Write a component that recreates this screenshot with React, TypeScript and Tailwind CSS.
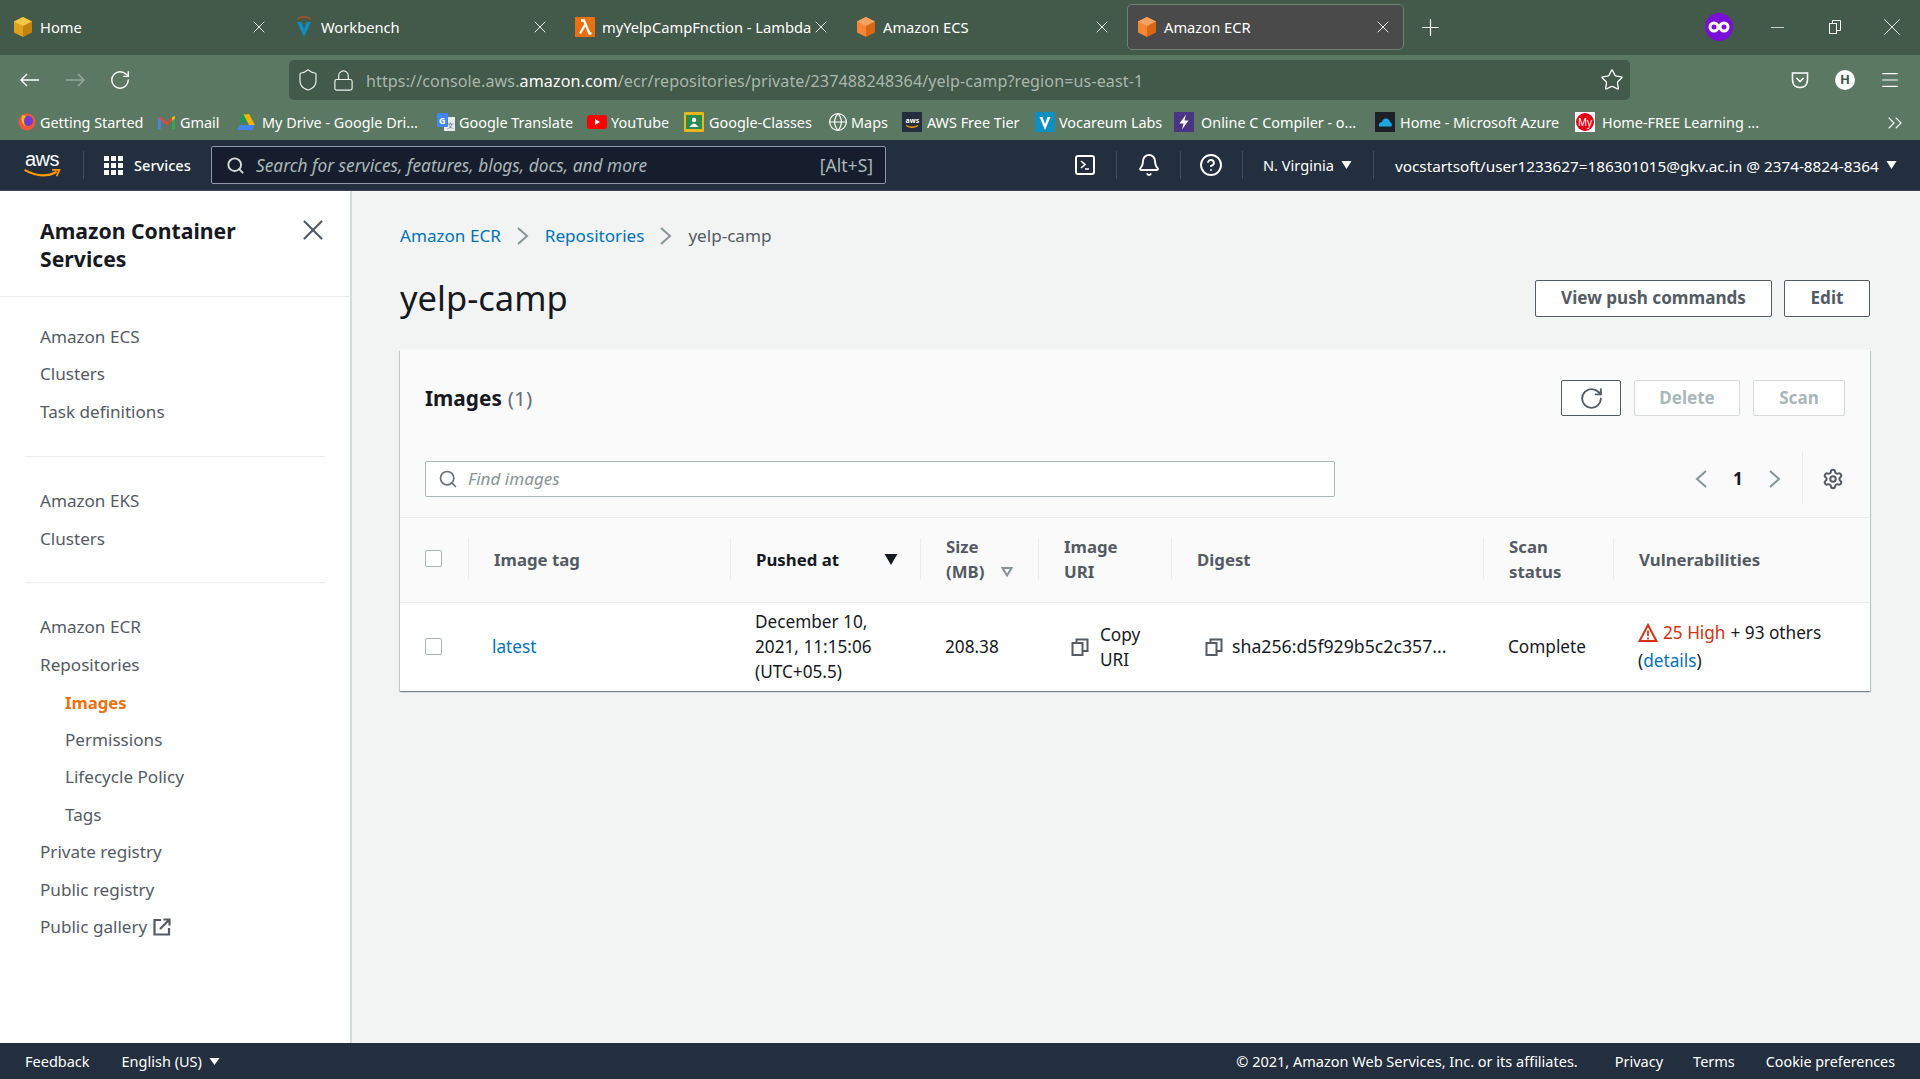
import * as React from "react";
import {
  Bell,
  ChevronsRight,
  CircleHelp,
  Globe,
  Lock,
  Menu,
  Minus,
  Plus,
  RotateCw,
  Search,
  Settings,
  Shield,
  Star,
  X,
} from "lucide-react";

function BoxIcon({ light, dark, top }: { light: string; dark: string; top: string }): React.JSX.Element {
  return (
    <svg viewBox="0 0 20 22" className="w-[20px] h-[22px] shrink-0">
      <path d="M10 1 L19 5.5 V16.5 L10 21 Z" fill={dark} />
      <path d="M10 1 L1 5.5 V16.5 L10 21 Z" fill={light} />
      <path d="M10 1 L19 5.5 L10 10 L1 5.5 Z" fill={top} />
    </svg>
  );
}

function VocareumIcon(): React.JSX.Element {
  return (
    <svg viewBox="0 0 20 22" className="w-[20px] h-[22px] shrink-0">
      <path d="M3 6 L10 21 L17 6 L12.5 6 L10 13 L7.5 6 Z" fill="#0f8fc0" />
      <path d="M3 3 Q10 -1 17 3" fill="none" stroke="#b5532b" strokeWidth="1.3" />
    </svg>
  );
}

function LambdaIcon(): React.JSX.Element {
  return (
    <svg viewBox="0 0 20 20" className="w-[20px] h-[20px] shrink-0">
      <rect width="20" height="20" fill="#e8700f" />
      <path d="M6 3.5 H9 L14.5 16.5 H16.5 M10 8 L5 16.5" fill="none" stroke="#fff" strokeWidth="2.3" />
    </svg>
  );
}

function Tab({ icon, label, active }: { icon: React.ReactNode; label: string; active?: boolean }): React.JSX.Element {
  return (
    <div
      className={
        active
          ? "w-[277px] h-[46px] shrink-0 flex items-center pl-[9px] rounded-[5px] bg-[#4a4a4a] border border-[#6f8274] text-white"
          : "w-[277px] h-[46px] shrink-0 flex items-center pl-[10px] text-white"
      }
    >
      <div className="w-[26px] shrink-0">{icon}</div>
      <span className="text-[14.7px] pl-[1px] mt-[1px] w-[210px] whitespace-nowrap overflow-hidden">{label}</span>
      <X size={20} strokeWidth={1.2} className="text-[#e8ece9] shrink-0" />
    </div>
  );
}

function TabBar(): React.JSX.Element {
  return (
    <div className="h-[55px] bg-[#43594a] flex items-start pl-[3px] pt-[4px] gap-[4px]">
      <Tab icon={<BoxIcon light="#e0a21c" dark="#c4820f" top="#f4c744" />} label="Home" />
      <Tab icon={<VocareumIcon />} label="Workbench" />
      <Tab icon={<LambdaIcon />} label="myYelpCampFnction - Lambda" />
      <Tab icon={<BoxIcon light="#f58534" dark="#d86613" top="#f7a15e" />} label="Amazon ECS" />
      <Tab icon={<BoxIcon light="#f58534" dark="#d86613" top="#f7a15e" />} label="Amazon ECR" active />
      <div className="w-[44px] h-[46px] flex items-center justify-center">
        <Plus size={27} strokeWidth={1.1} className="text-white" />
      </div>
      <div className="ml-auto h-[46px] flex items-center">
        <svg viewBox="0 0 28 28" className="w-[28px] h-[28px]">
          <circle cx="14" cy="14" r="14" fill="#7a10d8" />
          <circle cx="9" cy="14" r="4" fill="none" stroke="#fff" strokeWidth="3" />
          <circle cx="19" cy="14" r="4" fill="none" stroke="#fff" strokeWidth="3" />
        </svg>
        <div className="ml-[15px] w-[58px] flex justify-center">
          <Minus size={21} strokeWidth={0.8} className="text-white" />
        </div>
        <div className="w-[58px] flex justify-center">
          <svg viewBox="0 0 14 16" className="w-[14px] h-[16px]" fill="none" stroke="#fff">
            <rect x="1.5" y="4.5" width="7" height="10" />
            <path d="M4.5 4.5 V1.5 H12.5 V11.5 H8.5" />
          </svg>
        </div>
        <div className="w-[56px] flex justify-center">
          <X size={30} strokeWidth={0.7} className="text-white" />
        </div>
      </div>
    </div>
  );
}

function NavArrow({ forward, className }: { forward?: boolean; className?: string }): React.JSX.Element {
  return (
    <svg viewBox="0 0 20 14" className={"w-[20px] h-[14px] shrink-0 " + (className ?? "")} fill="none" stroke="currentColor" strokeWidth="1.5">
      <path d={forward ? "M1 7 H19 M13 1 L19 7 L13 13" : "M19 7 H1 M7 1 L1 7 L7 13"} />
    </svg>
  );
}

function ToolBar(): React.JSX.Element {
  return (
    <div className="h-[50px] bg-[#5b7962] flex items-center pl-[20px] text-white">
      <NavArrow />
      <NavArrow forward className="ml-[25px] text-[#94a89a]" />
      <RotateCw size={22} strokeWidth={1.5} className="ml-[24px]" />
      <div className="ml-[158px] w-[1341px] h-[40px] rounded-[5px] bg-[#43594a] flex items-center pl-[7px] pr-[6px]">
        <Shield size={24} strokeWidth={1.2} className="text-[#eef1ef]" />
        <Lock size={23} strokeWidth={1.2} className="ml-[12px] text-[#eef1ef]" />
        <span className="ml-[11px] mt-[2px] text-[16.1px] tracking-[0.1px] text-[#a9b7ad] whitespace-nowrap">
          https://console.aws.<span className="text-white">amazon.com</span>
          /ecr/repositories/private/237488248364/yelp-camp?region=us-east-1
        </span>
        <Star size={24} strokeWidth={1.3} className="ml-auto text-white" />
      </div>
      <svg viewBox="0 0 20 20" className="ml-[160px] w-[20px] h-[20px]" fill="none" stroke="#fff" strokeWidth="1.6">
        <path d="M2.5 3 H17.5 V9.5 Q17.5 17.5 10 17.5 Q2.5 17.5 2.5 9.5 Z" />
        <path d="M6.5 8 L10 11.5 L13.5 8" />
      </svg>
      <div className="ml-[25px] w-[20px] h-[20px] rounded-full bg-white flex items-center justify-center text-[#43594a] text-[13px] font-bold">
        H
      </div>
      <Menu size={22} strokeWidth={1.3} className="ml-[24px]" />
    </div>
  );
}

const bookmarkIcons: Record<string, React.ReactNode> = {
  fox: (
    <svg viewBox="0 0 18 18" className="w-[18px] h-[18px]">
      <circle cx="9" cy="9" r="8.5" fill="#ea5a38" />
      <circle cx="10" cy="8" r="5" fill="#6f3bd1" />
      <path d="M4 2 Q2 10 8 14 Q4 8 8 3 Z" fill="#ffb320" />
    </svg>
  ),
  gmail: (
    <svg viewBox="0 0 20 16" className="w-[19px] h-[15px]">
      <path d="M1 15 V2 L4 2 V15 Z" fill="#4285f4" />
      <path d="M16 15 V2 L19 2 V15 Z" fill="#34a853" />
      <path d="M1 3 L4 2 L10 8 L16 2 L19 3 L10 11 Z" fill="#ea4335" />
      <path d="M16 2 L19 1 V4 L16 6 Z" fill="#fbbc04" />
    </svg>
  ),
  drive: (
    <svg viewBox="0 0 20 18" className="w-[20px] h-[18px]">
      <path d="M7 1 H13 L7 12 L4 6.5 Z" fill="#0f9d58" />
      <path d="M13 1 L19 12 H13 L7.5 1.5 Z" fill="#f4b400" />
      <path d="M4 12 H19 L16 17 H1 Z" fill="#4285f4" />
    </svg>
  ),
  translate: (
    <svg viewBox="0 0 20 20" className="w-[20px] h-[20px]">
      <rect x="8" y="5" width="11" height="14" fill="#e8eaed" />
      <rect x="1" y="1" width="11" height="14" rx="1" fill="#4285f4" />
      <text x="3" y="12" fontSize="9" fontWeight="700" fill="#fff">G</text>
      <text x="11" y="16" fontSize="7" fill="#5f6368">文</text>
    </svg>
  ),
  youtube: (
    <svg viewBox="0 0 20 14" className="w-[20px] h-[14px]">
      <rect width="20" height="14" rx="3" fill="#f00" />
      <path d="M8 4 L13 7 L8 10 Z" fill="#fff" />
    </svg>
  ),
  classroom: (
    <svg viewBox="0 0 20 20" className="w-[20px] h-[20px]">
      <rect width="20" height="20" rx="1" fill="#e6b81e" />
      <rect x="2" y="3" width="16" height="14" fill="#2d8a4e" />
      <circle cx="10" cy="8" r="2.2" fill="#fff" />
      <path d="M5.5 15 Q10 8 14.5 15 Z" fill="#fff" />
    </svg>
  ),
  maps: <Globe size={20} strokeWidth={1.4} className="text-white" />,
  aws: (
    <svg viewBox="0 0 20 20" className="w-[20px] h-[20px]">
      <rect width="20" height="20" fill="#232f3e" />
      <text x="3.5" y="11" fontSize="7" fontWeight="700" fill="#fff">aws</text>
      <path d="M4 13.5 Q10 17 16 13.5" fill="none" stroke="#f90" strokeWidth="1.3" />
    </svg>
  ),
  vocareum: (
    <svg viewBox="0 0 20 20" className="w-[20px] h-[20px]">
      <rect width="20" height="20" fill="#0f8fc0" />
      <path d="M4.5 5 L10 18 L15.5 5 L12.5 5 L10 12 L7.5 5 Z" fill="#fff" />
    </svg>
  ),
  compiler: (
    <svg viewBox="0 0 20 20" className="w-[20px] h-[20px]">
      <rect width="20" height="20" fill="#4b3483" />
      <path d="M12 2.5 L5.5 11.5 H9.5 L8 17.5 L14.5 8.5 H10.5 Z" fill="#fff" />
    </svg>
  ),
  azure: (
    <svg viewBox="0 0 20 20" className="w-[20px] h-[20px]">
      <rect width="20" height="20" fill="#1b2126" />
      <path d="M4 14.5 Q3 10.5 7 10 Q8 6 11.5 6.5 Q14.5 7 15 10 Q17.5 11 16.5 14.5 Z" fill="#19a9e5" />
    </svg>
  ),
  my: (
    <div className="w-[20px] h-[20px] bg-white flex items-center justify-center">
      <div className="w-[18px] h-[18px] rounded-full bg-[#e60012] text-white text-[10px] flex items-center justify-center">
        My
      </div>
    </div>
  ),
};

const bookmarks = [
  { icon: "fox", label: "Getting Started", width: "w-[139px]", offset: "w-[22px]" },
  { icon: "gmail", label: "Gmail", width: "w-[79px]", offset: "w-[23px]" },
  { icon: "drive", label: "My Drive - Google Dri...", width: "w-[200px]", offset: "w-[26px]" },
  { icon: "translate", label: "Google Translate", width: "w-[151px]", offset: "w-[23px]" },
  { icon: "youtube", label: "YouTube", width: "w-[97px]", offset: "w-[24px]" },
  { icon: "classroom", label: "Google-Classes", width: "w-[144px]", offset: "w-[25px]" },
  { icon: "maps", label: "Maps", width: "w-[74px]", offset: "w-[23px]" },
  { icon: "aws", label: "AWS Free Tier", width: "w-[133px]", offset: "w-[25px]" },
  { icon: "vocareum", label: "Vocareum Labs", width: "w-[139px]", offset: "w-[24px]" },
  { icon: "compiler", label: "Online C Compiler - o...", width: "w-[201px]", offset: "w-[27px]" },
  { icon: "azure", label: "Home - Microsoft Azure", width: "w-[200px]", offset: "w-[25px]" },
  { icon: "my", label: "Home-FREE Learning ...", width: "w-[320px]", offset: "w-[27px]" },
];

function BookmarksBar(): React.JSX.Element {
  return (
    <div className="h-[35px] bg-[#5b7962] flex items-center pl-[18px] text-white">
      {bookmarks.map((b) => (
        <div key={b.label} className={"flex items-center shrink-0 " + b.width}>
          <div className={"shrink-0 " + b.offset}>{bookmarkIcons[b.icon]}</div>
          <span className="text-[14.4px] mt-[1px] whitespace-nowrap">{b.label}</span>
        </div>
      ))}
      <ChevronsRight size={24} strokeWidth={1.1} className="-ml-[12px]" />
    </div>
  );
}

function Caret({ className }: { className?: string }): React.JSX.Element {
  return (
    <svg viewBox="0 0 12 8" className={"shrink-0 " + (className ?? "w-[12px] h-[8px]")} preserveAspectRatio="none" fill="currentColor">
      <path d="M0.5 0 H11.5 L6 8 Z" />
    </svg>
  );
}

function Chev({ left, className }: { left?: boolean; className?: string }): React.JSX.Element {
  return (
    <svg viewBox="0 0 12 18" className={"w-[12px] h-[18px] shrink-0 " + (className ?? "")} fill="none" stroke="currentColor" strokeWidth="2">
      <path d={left ? "M11 1 L2 9 L11 17" : "M1 1 L10 9 L1 17"} />
    </svg>
  );
}

function NavBar(): React.JSX.Element {
  return (
    <div className="h-[51px] bg-[#232f3e] flex items-center text-white border-b border-[#3c4757]">
      <div className="ml-[22px] w-[40px] flex flex-col items-center leading-none">
        <span className="text-[20px] leading-[17px] tracking-[-0.5px] font-['Liberation_Sans',sans-serif]">aws</span>
        <svg viewBox="0 0 40 12" className="w-[40px] h-[11px]">
          <path d="M1 2 Q20 13 36 4" fill="none" stroke="#f90" strokeWidth="2.4" />
          <path d="M31 2 L39 2 L36 9" fill="none" stroke="#f90" strokeWidth="2" />
        </svg>
      </div>
      <div className="ml-[21px] w-px h-[28px] bg-[#414d5c]" />
      <div className="ml-[20px] grid grid-cols-3 gap-[2px]">
        {Array.from({ length: 9 }).map((_, i) => (
          <div key={i} className="w-[5px] h-[5px] bg-white" />
        ))}
      </div>
      <span className="ml-[11px] mt-[2px] w-[57px] text-[14.6px] font-medium">Services</span>
      <div className="ml-[20px] w-[675px] h-[38px] bg-[#161e2d] border border-[#8d99a8] rounded-[2px] flex items-center pl-[14px] pr-[12px]">
        <Search size={19} strokeWidth={2.4} className="text-[#d5dbdb]" />
        <span className="ml-[11px] mt-[1px] text-[17.3px] italic text-[#aab7b8]">
          Search for services, features, blogs, docs, and more
        </span>
        <span className="ml-auto mt-[1px] text-[17.5px] text-[#aab7b8]">[Alt+S]</span>
      </div>
      <div className="ml-[189px] w-[20px] h-[20px] rounded-[3px] border-2 border-white flex items-center justify-center">
        <svg viewBox="0 0 14 14" className="w-[14px] h-[14px]" fill="none" stroke="#fff" strokeWidth="1.6">
          <path d="M3 3 L7 6.5 L3 10 M7 11 H11" />
        </svg>
      </div>
      <div className="ml-[21px] w-px h-[28px] bg-[#414d5c]" />
      <Bell size={24} strokeWidth={1.9} className="ml-[20px]" />
      <div className="ml-[19px] w-px h-[28px] bg-[#414d5c]" />
      <CircleHelp size={24} strokeWidth={1.9} className="ml-[18px]" />
      <div className="ml-[19px] w-px h-[28px] bg-[#414d5c]" />
      <span className="ml-[20px] mt-[2px] w-[71px] text-[14.6px] whitespace-nowrap">N. Virginia</span>
      <Caret className="ml-[7px] w-[11px] h-[8px]" />
      <div className="ml-[21px] w-px h-[28px] bg-[#414d5c]" />
      <span className="ml-[21px] mt-[2px] text-[15.3px] whitespace-nowrap">
        vocstartsoft/user1233627=186301015@gkv.ac.in @ 2374-8824-8364
      </span>
      <Caret className="ml-[7px] w-[11px] h-[8px]" />
    </div>
  );
}

function NavItem({ label, sub, active }: { label: string; sub?: boolean; active?: boolean }): React.JSX.Element {
  return (
    <div
      className={
        (sub ? "pl-[65px] " : "pl-[40px] ") +
        "h-[37.5px] flex items-center " +
        (active ? "text-[16.7px] text-[#ec7211] font-bold" : "text-[17.1px] text-[#545b64]")
      }
    >
      {label}
    </div>
  );
}

function Sidebar(): React.JSX.Element {
  return (
    <aside className="w-[352px] shrink-0 bg-white border-r-2 border-[#d5dbdb]">
      <div className="h-[106px] border-b border-[#eaeded] pl-[40px] pr-[20px] pt-[26px] flex justify-between">
        <div className="text-[21.2px] leading-[28px] font-bold text-[#16191f]">
          Amazon Container
          <br />
          Services
        </div>
        <X size={34} strokeWidth={1.5} className="text-[#545b64] -mt-[4px]" />
      </div>
      <div className="pt-[21px]">
        <NavItem label="Amazon ECS" />
        <NavItem label="Clusters" />
        <NavItem label="Task definitions" />
      </div>
      <div className="mx-[25px] mt-[25px] border-t border-[#eaeded]" />
      <div className="pt-[26px]">
        <NavItem label="Amazon EKS" />
        <NavItem label="Clusters" />
      </div>
      <div className="mx-[25px] mt-[24px] border-t border-[#eaeded]" />
      <div className="pt-[26px]">
        <NavItem label="Amazon ECR" />
        <NavItem label="Repositories" />
        <NavItem label="Images" sub active />
        <NavItem label="Permissions" sub />
        <NavItem label="Lifecycle Policy" sub />
        <NavItem label="Tags" sub />
        <NavItem label="Private registry" />
        <NavItem label="Public registry" />
        <div className="pl-[40px] h-[37.5px] flex items-center text-[17.1px] text-[#545b64]">
          Public gallery
          <svg viewBox="0 0 18 18" className="ml-[6px] w-[18px] h-[18px]" fill="none" stroke="#545b64" strokeWidth="2.2">
            <path d="M8 2 H1.5 V16.5 H16 V10" />
            <path d="M7 11 L16 2 M10.5 1.5 H16.5 V7.5" />
          </svg>
        </div>
      </div>
    </aside>
  );
}

function CopyIcon(): React.JSX.Element {
  return (
    <svg viewBox="0 0 18 18" className="w-[18px] h-[18px] shrink-0" fill="none" stroke="#545b64" strokeWidth="2">
      <rect x="1.5" y="5" width="10" height="12" />
      <path d="M5.5 4.5 V1.5 H16.5 V13 H12" />
    </svg>
  );
}

function Checkbox(): React.JSX.Element {
  return <div className="w-[17px] h-[17px] rounded-[2px] bg-white border border-[#aab7b8]" />;
}

function HeadCell({ children, last }: { children: React.ReactNode; last?: boolean }): React.JSX.Element {
  return (
    <div
      className={
        "h-[42px] flex items-center pl-[25px] text-[16.8px] leading-[25px] font-bold text-[#545b64] " +
        (last ? "" : "border-r border-[#eaeded]")
      }
    >
      {children}
    </div>
  );
}

function ImagesTable(): React.JSX.Element {
  return (
    <div className="text-[17.2px] leading-[25px] text-[#16191f]">
      <div className="h-[86px] pb-[2px] bg-[#fafafa] border-t border-[#eaeded] border-b grid grid-cols-[69px_262px_190px_118px_133px_312px_130px_1fr] items-center">
        <div className="h-[42px] flex items-center pl-[25px] pb-[2px] border-r border-[#eaeded]">
          <Checkbox />
        </div>
        <HeadCell>Image tag</HeadCell>
        <HeadCell>
          <span className="text-[#16191f]">Pushed at</span>
          <Caret className="ml-[45px] w-[14px] h-[11px] text-[#16191f]" />
        </HeadCell>
        <HeadCell>
          <div>
            Size
            <br />
            (MB)
          </div>
          <svg viewBox="0 0 12 10" className="w-[12px] h-[10px] ml-[17px] mt-[25px]" fill="none" stroke="#879596" strokeWidth="2">
            <path d="M1.5 1 H10.5 L6 8.5 Z" />
          </svg>
        </HeadCell>
        <HeadCell>
          <div>
            Image
            <br />
            URI
          </div>
        </HeadCell>
        <HeadCell>Digest</HeadCell>
        <HeadCell>
          <div>
            Scan
            <br />
            status
          </div>
        </HeadCell>
        <HeadCell last>Vulnerabilities</HeadCell>
      </div>
      <div className="h-[88px] pb-[1px] bg-white grid grid-cols-[69px_262px_190px_118px_133px_312px_130px_1fr] items-center">
        <div className="pl-[25px]">
          <Checkbox />
        </div>
        <div className="pl-[23px] text-[#0073bb]">latest</div>
        <div className="pl-[24px]">
          December 10,
          <br />
          2021, 11:15:06
          <br />
          (UTC+05.5)
        </div>
        <div className="pl-[24px]">208.38</div>
        <div className="pl-[32px] flex items-center gap-[11px]">
          <CopyIcon />
          <div>
            Copy
            <br />
            URI
          </div>
        </div>
        <div className="pl-[33px] flex items-center gap-[9px] whitespace-nowrap -mr-[8px] text-[17.7px]">
          <CopyIcon />
          <span>sha256:d5f929b5c2c357...</span>
        </div>
        <div className="pl-[24px]">Complete</div>
        <div className="pl-[24px] leading-[28px]">
          <div className="flex items-center">
            <svg viewBox="0 0 20 20" className="w-[20px] h-[20px] mr-[5px]" fill="none" stroke="#d13212" strokeWidth="2">
              <path d="M10 2 L18.5 18 H1.5 Z" />
              <path d="M10 7.5 V13 M10 14.5 V16.5" strokeWidth="1.7" />
            </svg>
            <span className="text-[#d13212]">25 High</span>
            <span className="ml-[5px]">+ 93 others</span>
          </div>
          <div>
            (<span className="text-[#0073bb]">details</span>)
          </div>
        </div>
      </div>
    </div>
  );
}

function ImagesCard(): React.JSX.Element {
  return (
    <div className="bg-[#fafafa] shadow-[0_1px_1px_0_rgba(0,28,36,0.3),1px_1px_1px_0_rgba(0,28,36,0.15),-1px_1px_1px_0_rgba(0,28,36,0.15)]">
      <div className="h-[112px] pl-[25px] pr-[25px] pt-[30px] flex items-start justify-between">
        <div className="h-[37px] flex items-center text-[20.8px]">
          <span className="font-bold text-[#16191f]">Images</span>
          <span className="ml-[6px] text-[#687078]">(1)</span>
        </div>
        <div className="flex">
          <div className="w-[60px] h-[36px] bg-white border border-[#545b64] rounded-[2px] flex items-center justify-center">
            <RotateCw size={25} strokeWidth={1.8} className="text-[#545b64]" />
          </div>
          <div className="ml-[13px] w-[106px] h-[36px] bg-white border border-[#d5dbdb] rounded-[2px] flex items-center justify-center text-[17.1px] font-bold text-[#aab7b8]">
            Delete
          </div>
          <div className="ml-[13px] w-[92px] h-[36px] bg-white border border-[#d5dbdb] rounded-[2px] flex items-center justify-center text-[17.1px] font-bold text-[#aab7b8]">
            Scan
          </div>
        </div>
      </div>
      <div className="h-[55px] pl-[26px] flex items-start -mt-[1px] mb-[1px]">
        <div className="w-[910px] h-[36px] bg-white border border-[#aab7b8] rounded-[2px] flex items-center pl-[12px] -ml-[1px]">
          <Search size={20} strokeWidth={2} className="text-[#687078]" />
          <span className="ml-[10px] text-[17.1px] italic text-[#879596]">Find images</span>
        </div>
        <div className="ml-[360px] h-[36px] flex items-center">
          <Chev left className="text-[#879596]" />
          <span className="ml-[26px] w-[10px] text-[17.1px] font-bold text-[#16191f]">1</span>
          <Chev className="ml-[26px] text-[#879596]" />
          <div className="ml-[21px] w-px h-[54px] -mt-[2px] bg-[#eaeded]" />
          <Settings size={22} strokeWidth={2.2} className="ml-[19px] text-[#545b64]" />
        </div>
      </div>
      <ImagesTable />
    </div>
  );
}

function Footer(): React.JSX.Element {
  return (
    <div className="h-[36px] bg-[#232f3e] flex items-center pl-[25px] pr-[25px] pt-[1px] text-white text-[14.5px]">
      <span>Feedback</span>
      <span className="ml-[32px]">English (US)</span>
      <Caret className="ml-[7px] w-[11px] h-[7px]" />
      <span className="ml-auto">© 2021, Amazon Web Services, Inc. or its affiliates.</span>
      <span className="ml-[37px]">Privacy</span>
      <span className="ml-[30px]">Terms</span>
      <span className="ml-[31px] text-[14.3px]">Cookie preferences</span>
    </div>
  );
}

export default function App(): React.JSX.Element {
  return (
    <div className="w-[1920px] h-[1079px] overflow-hidden flex flex-col bg-[#f2f3f3] font-['Noto_Sans',sans-serif]">
      <TabBar />
      <ToolBar />
      <BookmarksBar />
      <NavBar />
      <div className="flex-1 flex min-h-0">
        <Sidebar />
        <main className="flex-1 pl-[48px] pr-[50px]">
          <div className="h-[44px] mt-[23px] flex items-center text-[17.1px]">
            <span className="text-[#0073bb]">Amazon ECR</span>
            <Chev className="mx-[16px] text-[#879596]" />
            <span className="text-[#0073bb]">Repositories</span>
            <Chev className="mx-[16px] text-[#879596]" />
            <span className="text-[#545b64]">yelp-camp</span>
          </div>
          <div className="mt-[22px] h-[36px] flex items-center justify-between">
            <h1 className="text-[34.5px] text-[#16191f]">yelp-camp</h1>
            <div className="flex gap-[12px]">
              <div className="w-[237px] h-[37px] bg-white border border-[#545b64] rounded-[2px] flex items-center justify-center text-[17.1px] font-bold text-[#545b64]">
                View push commands
              </div>
              <div className="w-[86px] h-[37px] bg-white border border-[#545b64] rounded-[2px] flex items-center justify-center text-[17.1px] font-bold text-[#545b64]">
                Edit
              </div>
            </div>
          </div>
          <div className="mt-[34px]">
            <ImagesCard />
          </div>
        </main>
      </div>
      <Footer />
    </div>
  );
}
